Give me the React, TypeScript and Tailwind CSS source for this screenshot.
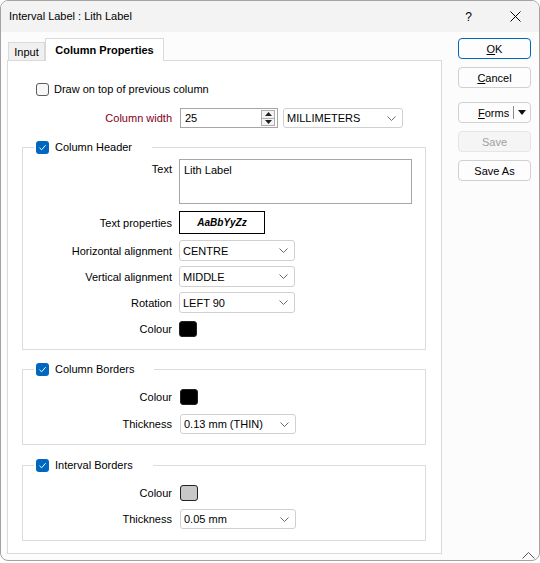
import type { ReactNode } from 'react'

const FONT = "font-['Liberation_Sans','Noto_Sans',sans-serif]"

function Check({ checked }: { checked?: boolean }) {
  if (checked) {
    return (
      <span className="w-[13px] h-[13px] rounded-[3px] bg-[#0067c0] flex items-center justify-center shrink-0">
        <svg width="9" height="9" viewBox="0 0 9 9">
          <path d="M1.5 4.8 L3.6 6.8 L7.6 2.2" fill="none" stroke="#fff" strokeWidth="1" />
        </svg>
      </span>
    )
  }
  return <span className="w-[13px] h-[13px] rounded-[3px] border border-[#5c5c5c] bg-[#f7f7f7] shrink-0" />
}

function Chevron() {
  return (
    <svg width="9" height="5" viewBox="0 0 9 5" className="shrink-0">
      <path d="M0.5 0.5 L4.5 4.5 L8.5 0.5" fill="none" stroke="#6a6a6a" strokeWidth="1" />
    </svg>
  )
}

function Select({ value, w, h = 21 }: { value: string; w: number; h?: number }) {
  return (
    <div
      className="border border-[#d0d0d0] rounded-[3px] bg-white flex items-center justify-between pl-[3px] pr-[6px] text-[11px] leading-[14px] text-black"
      style={{ width: w, height: h }}
    >
      <span>{value}</span>
      <Chevron />
    </div>
  )
}

function Swatch({ color }: { color: string }) {
  return <div className="w-[18px] h-[16px] rounded-[3px] border border-[#222]" style={{ background: color }} />
}

function Row({ label, children, lw = 149, gap = 7, start }: { label: string; children: ReactNode; lw?: number; gap?: number; start?: boolean }) {
  return (
    <div className={`flex ${start ? 'items-start' : 'items-center'}`}>
      <div className={`text-right text-[11px] leading-[14px] shrink-0 ${start ? 'pt-[3px]' : ''}`} style={{ width: lw, marginRight: gap }}>
        {label}
      </div>
      {children}
    </div>
  )
}

function Group({ title, className, children }: { title: string; className: string; children: ReactNode }) {
  return (
    <fieldset className={`border border-[#dcdcdc] ml-[14px] w-[404px] ${className}`}>
      <legend className="ml-[11px] pl-[2px] pr-[20px] h-[14px] flex items-center gap-[6px] text-[11px] leading-[14px]">
        <Check checked />
        <span>{title}</span>
      </legend>
      {children}
    </fieldset>
  )
}

function Btn({ children, primary, disabled, className = '' }: { children: ReactNode; primary?: boolean; disabled?: boolean; className?: string }) {
  return (
    <div
      className={`w-[73px] h-[21px] rounded-[4px] flex items-center justify-center text-[11px] leading-[14px] ${
        primary
          ? 'border border-[#0067c0] bg-[#fdfdfd] text-black'
          : disabled
            ? 'border border-[#e5e5e5] bg-[#f5f5f5] text-[#a0a0a0]'
            : 'border border-[#d0d0d0] bg-[#fdfdfd] text-black'
      } ${className}`}
    >
      {children}
    </div>
  )
}

export default function App() {
  return (
    <div className={`w-[540px] h-[563px] bg-white overflow-hidden text-black ${FONT}`}>
      <div className="h-[561px] border border-[#a3a3a3] rounded-[8px] bg-[#fcfcfc] flex flex-col overflow-hidden relative">
        {/* title bar */}
        <div className="h-[31px] bg-[#f3f3f3] flex items-center pl-[8px] shrink-0">
          <span className="text-[11px]">Interval Label : Lith Label</span>
          <span className="ml-auto text-[12px] mr-[38px]">?</span>
          <svg width="11" height="11" viewBox="0 0 11 11" className="mr-[18px]">
            <path d="M0.5 0.5 L10.5 10.5 M10.5 0.5 L0.5 10.5" stroke="#000" strokeWidth="1" />
          </svg>
        </div>

        <div className="flex flex-1 pl-[6px]">
          {/* tabs + panel */}
          <div className="w-[435px] flex flex-col pt-[6px] pb-[6px]">
            <div className="flex items-end h-[22px] pl-[1px] relative z-10">
              <div className="w-[37px] h-[18px] border border-b-0 border-[#d9d9d9] bg-[#f0f0f0] text-[11px] leading-[14px] flex items-center justify-center">
                Input
              </div>
              <div className="w-[119px] h-[23px] -mb-[1px] border border-b-0 border-[#d9d9d9] bg-white text-[11px] leading-[14px] font-bold flex items-center justify-center">
                Column Properties
              </div>
            </div>
            <div className="flex-1 border border-[#d9d9d9] bg-white flex flex-col">
              <div className="flex items-center gap-[5px] pl-[28px] pt-[21px] text-[11px] leading-[14px] h-[35px]">
                <Check />
                <span>Draw on top of previous column</span>
              </div>

              <div className="flex items-center mt-[12px] h-[20px]">
                <div className="w-[164px] text-right text-[11px] leading-[14px] text-[#800020] mr-[8px]">Column width</div>
                <div className="w-[98px] h-[20px] border border-[#a6a6a6] flex items-center justify-between pl-[4px] pr-[2px] text-[11px] leading-[14px]">
                  <span>25</span>
                  <div className="w-[14px] h-[16px] border border-[#adadad] bg-[#f4f4f4] flex flex-col">
                    <div className="flex-1 flex items-center justify-center border-b border-[#adadad]">
                      <svg width="7" height="4" viewBox="0 0 7 4"><path d="M0 4 L3.5 0 L7 4 Z" fill="#222" /></svg>
                    </div>
                    <div className="flex-1 flex items-center justify-center">
                      <svg width="7" height="4" viewBox="0 0 7 4"><path d="M0 0 L3.5 4 L7 0 Z" fill="#222" /></svg>
                    </div>
                  </div>
                </div>
                <div className="ml-[5px]">
                  <Select value="MILLIMETERS" w={120} h={20} />
                </div>
              </div>

              <Group title="Column Header" className="mt-[12px] pt-[5px] pb-[12px]">
                <Row label="Text" start>
                  <div className="w-[233px] h-[45px] border border-[#a6a6a6] text-[11px] leading-[14px] pl-[4px] pt-[3px]">Lith Label</div>
                </Row>
                <div className="mt-[7px]">
                  <Row label="Text properties">
                    <div className="w-[86px] h-[23px] border border-black flex items-center justify-center text-[10px] font-bold italic">
                      AaBbYyZz
                    </div>
                  </Row>
                </div>
                <div className="mt-[6px]">
                  <Row label="Horizontal alignment">
                    <Select value="CENTRE" w={116} />
                  </Row>
                </div>
                <div className="mt-[5px]">
                  <Row label="Vertical alignment">
                    <Select value="MIDDLE" w={116} />
                  </Row>
                </div>
                <div className="mt-[5px]">
                  <Row label="Rotation">
                    <Select value="LEFT 90" w={116} />
                  </Row>
                </div>
                <div className="mt-[8px]">
                  <Row label="Colour">
                    <Swatch color="#000" />
                  </Row>
                </div>
              </Group>

              <Group title="Column Borders" className="mt-[12px] pt-[13px] pb-[10px]">
                <Row label="Colour" gap={8}>
                  <Swatch color="#000" />
                </Row>
                <div className="mt-[9px]">
                  <Row label="Thickness" gap={8}>
                    <Select value="0.13 mm (THIN)" w={116} h={20} />
                  </Row>
                </div>
              </Group>

              <Group title="Interval Borders" className="mt-[13px] pt-[13px] pb-[11px]">
                <Row label="Colour" gap={8}>
                  <Swatch color="#c8c8c8" />
                </Row>
                <div className="mt-[8px]">
                  <Row label="Thickness" gap={8}>
                    <Select value="0.05 mm" w={116} h={20} />
                  </Row>
                </div>
              </Group>
            </div>
          </div>

          {/* buttons */}
          <div className="ml-[16px] pt-[6px] flex flex-col">
            <Btn primary>
              <span><span className="underline">O</span>K</span>
            </Btn>
            <Btn className="mt-[8px]">
              <span><span className="underline">C</span>ancel</span>
            </Btn>
            <div className="mt-[14px] w-[73px] h-[21px] rounded-[4px] border border-[#d0d0d0] bg-[#fdfdfd] flex items-center text-[11px] leading-[14px]">
              <span className="ml-[19px]"><span className="underline">F</span>orms</span>
              <span className="ml-auto w-[1px] h-[13px] bg-[#8a8a8a]" />
              <svg width="8" height="5" viewBox="0 0 8 5" className="mx-[4px]"><path d="M0 0 L8 0 L4 5 Z" fill="#111" /></svg>
            </div>
            <Btn disabled className="mt-[8px]">Save</Btn>
            <Btn className="mt-[8px]">Save As</Btn>
          </div>
        </div>

        <svg width="13" height="7" viewBox="0 0 13 7" className="absolute right-[4px] bottom-[1px]">
          <path d="M0.5 6.5 L6.5 0.5 L12.5 6.5" fill="none" stroke="#555" strokeWidth="1" />
        </svg>
      </div>
    </div>
  )
}
